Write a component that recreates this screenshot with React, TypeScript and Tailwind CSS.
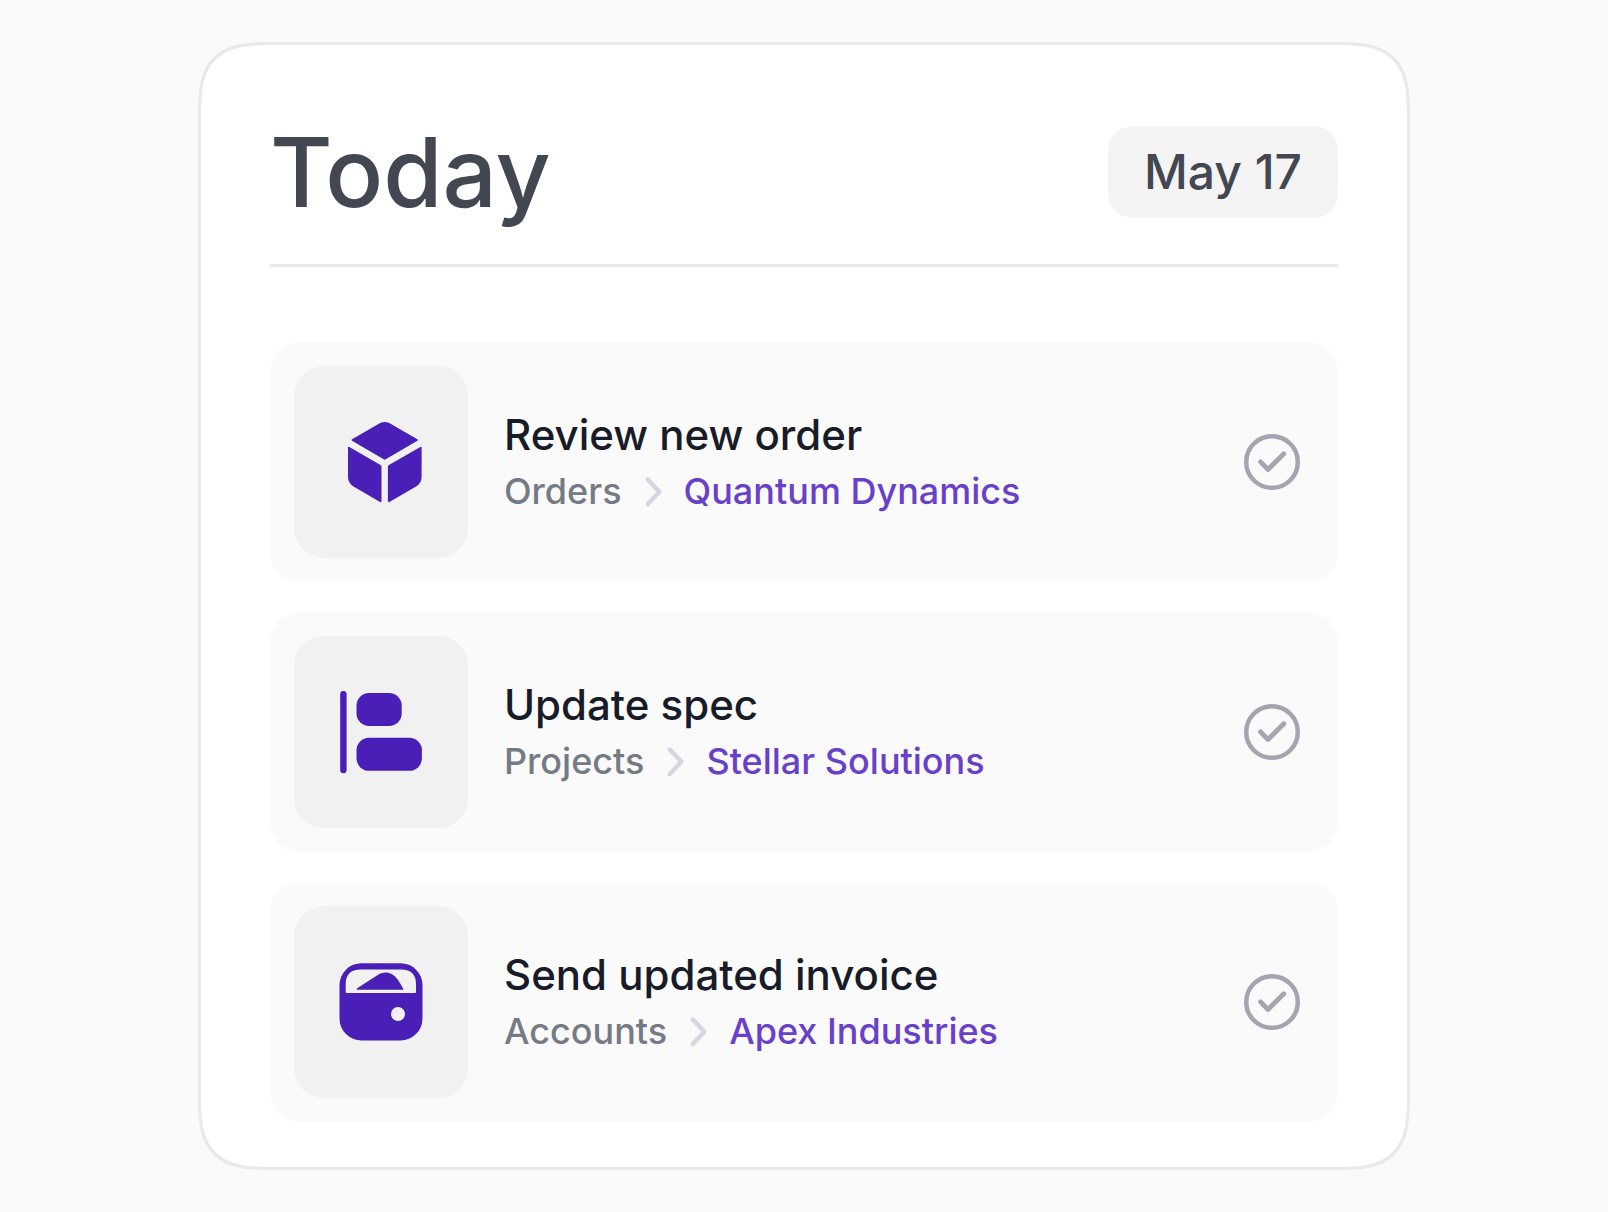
import type { ReactNode } from "react";

interface Task {
  title: string;
  section: string;
  company: string;
  icon: ReactNode;
}

const CubeIcon = () => (
  <svg viewBox="0 0 96 96" className="size-24 fill-[#4a1fb8]" aria-hidden="true">
    <path d="M19 25.2 47.2 9Q51.7 6.9 56.2 9L84.4 25.2Q85.6 26 84.4 26.8L52.7 45.3Q51.7 46 50.7 45.3L19 26.8Q17.8 26 19 25.2Z" />
    <path d="M15 33.6Q15 32.2 16.3 32.9L47.5 50.9Q48.5 51.5 48.5 52.5V87Q48.5 88.6 47 88L20.5 72.6Q15 68.9 15 62.7Z" />
    <path d="M88.6 33.6Q88.6 32.2 87.3 32.9L55.9 50.9Q54.9 51.5 54.9 52.5V87Q54.9 88.6 56.4 88L83.1 72.6Q88.6 68.9 88.6 62.7Z" />
  </svg>
);

const AlignIcon = () => (
  <svg viewBox="0 0 96 96" className="size-24 fill-[#4a1fb8]" aria-hidden="true">
    <rect x="7.2" y="7" width="6.4" height="82.3" rx="3.2" />
    <rect x="23.5" y="9" width="45.2" height="33" rx="12.5" />
    <rect x="23.5" y="53.8" width="65.4" height="33" rx="12.5" />
  </svg>
);

const WalletIcon = () => (
  <svg viewBox="0 0 96 96" className="size-24 fill-[#4a1fb8]" aria-hidden="true">
    <path
      fillRule="evenodd"
      d="M28.5 9.2H67.5A22 22 0 0 1 89.5 31.2V64.5A22 22 0 0 1 67.5 86.5H28.5A22 22 0 0 1 6.5 64.5V31.2A22 22 0 0 1 28.5 9.2ZM27.5 15.6Q12.7 15.6 12.7 30.4V38Q12.7 39 13.7 39H82Q83 39 83 38V30.4Q83 15.6 68.2 15.6ZM65 53A7 7 0 1 0 65 67A7 7 0 1 0 65 53Z"
    />
    <path d="M24.2 34.2 43.6 21.7C48.4 18.4 54.2 17.5 59 20.2C63.5 22.7 66 27 70.2 34.6Q70.8 35.8 69.7 35.8H24.4Q22.8 35.2 24.2 34.2Z" />
  </svg>
);

const ChevronIcon = () => (
  <svg viewBox="0 0 38 36" className="h-9 w-[38px] fill-none stroke-[#d7d6e0]" aria-hidden="true">
    <path d="m13.8 6.6 11.6 12.2-11.6 12.2" strokeWidth="4.5" strokeLinecap="round" strokeLinejoin="round" />
  </svg>
);

const CheckIcon = () => (
  <svg viewBox="0 0 72 72" className="size-18 fill-none stroke-[#a3a6af]" aria-hidden="true">
    <circle cx="36" cy="36" r="25.8" strokeWidth="4.5" />
    <path d="m24.6 35.9 7.4 7.6 15.8-15.8" strokeWidth="4.8" strokeLinecap="round" strokeLinejoin="round" />
  </svg>
);

const tasks: Task[] = [
  { title: "Review new order", section: "Orders", company: "Quantum Dynamics", icon: <CubeIcon /> },
  { title: "Update spec", section: "Projects", company: "Stellar Solutions", icon: <AlignIcon /> },
  { title: "Send updated invoice", section: "Accounts", company: "Apex Industries", icon: <WalletIcon /> },
];

const TaskRow = ({ title, section, company, icon }: Task) => (
  <li className="flex items-center rounded-[30px] bg-[#fafafa] p-6 pr-[30px]">
    <div className="flex h-48 w-[174px] shrink-0 items-center justify-center rounded-[30px] bg-[#f1f1f1]">
      {icon}
    </div>
    <div className="ml-9 min-w-0 flex-1">
      <h2 className="text-[42px] leading-[58px] text-[#171c28]">{title}</h2>
      <div className="flex items-center gap-3 text-4xl leading-[54px]">
        <a href="#" className="text-[#757b85]">{section}</a>
        <ChevronIcon />
        <a href="#" className="text-[#6940c9]">{company}</a>
      </div>
    </div>
    <button type="button" aria-label={`Complete ${title}`} className="shrink-0 cursor-pointer">
      <CheckIcon />
    </button>
  </li>
);

const App = () => {
  return (
    <main className="flex min-h-screen items-center justify-center bg-[#fafafa] font-['Inter',sans-serif] font-medium">
      <section className="w-full max-w-[1212px] rounded-[60px] border-3 border-[#e9e9eb] bg-white px-[69px] pt-[79px] pb-[45px] supports-[corner-shape:squircle]:rounded-[80px] supports-[corner-shape:squircle]:[corner-shape:superellipse(1.7)]">
        <header className="flex items-center justify-between border-b-3 border-[#e9e9eb] pb-11">
          <h1 className="text-8xl leading-none text-[#434751]">Today</h1>
          <time
            dateTime="05-17"
            className="rounded-3xl bg-[#f4f4f4] px-9 text-5xl leading-[92px] text-[#434751] supports-[corner-shape:squircle]:rounded-[32px] supports-[corner-shape:squircle]:[corner-shape:superellipse(1.5)]"
          >
            May 17
          </time>
        </header>
        <ul className="mt-[75px] flex flex-col gap-[30px]">
          {tasks.map((task) => (
            <TaskRow key={task.title} {...task} />
          ))}
        </ul>
      </section>
    </main>
  );
};

export default App;
